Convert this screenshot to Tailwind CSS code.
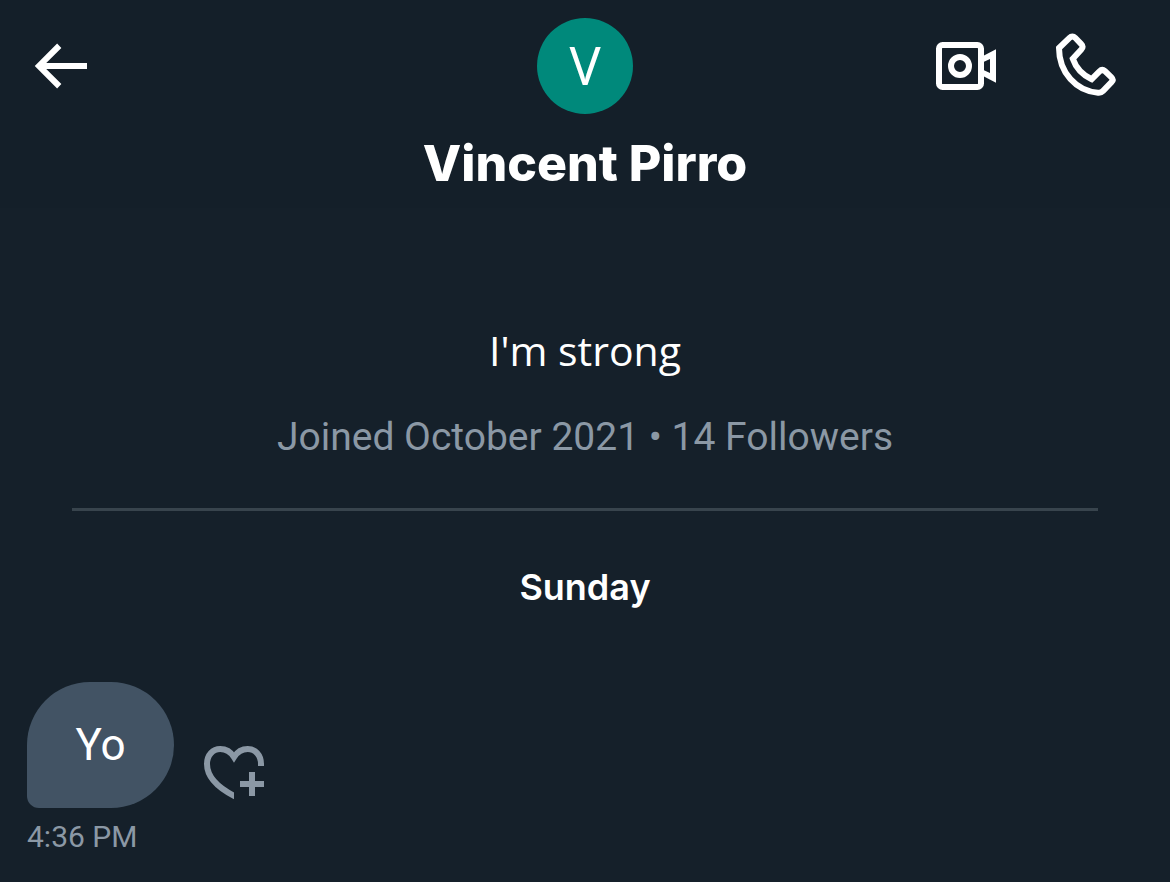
<!DOCTYPE html>
<html lang="en">
<head>
<meta charset="utf-8">
<meta name="viewport" content="width=device-width, initial-scale=1">
<title>Vincent Pirro</title>
<script src="https://cdn.jsdelivr.net/npm/@tailwindcss/browser@4"></script>
</head>
<body class="min-h-screen bg-[#15202a] font-['Roboto','Noto_Sans',sans-serif] text-white">
<header class="grid grid-cols-[1fr_auto_1fr] items-start bg-[#141f29] px-6 pt-4 pb-4">
  <button type="button" aria-label="Back" class="mt-3.5 size-18 justify-self-start">
    <svg viewBox="0 0 24 24" class="size-full" fill="currentColor" aria-hidden="true"><path d="M7.414 13l5.043 5.04-1.414 1.42L3.586 12l7.457-7.46 1.414 1.42L7.414 11H21v2H7.414z"/></svg>
  </button>
  <div class="flex flex-col items-center">
    <div class="mt-0.5 flex size-24 items-center justify-center rounded-full bg-[#00897b] pb-0.5 font-['Noto_Sans',sans-serif] text-[52px]">V</div>
    <h1 class="mt-5 font-['Inter',sans-serif] text-[50px] leading-[58px] font-extrabold">Vincent Pirro</h1>
  </div>
  <div class="mt-3.5 mr-6 flex gap-12 justify-self-end">
    <button type="button" aria-label="Video call" class="size-18">
      <svg viewBox="0 0 24 24" class="size-full" aria-hidden="true"><rect x="3" y="5" width="14" height="14" rx="1.200" fill="none" stroke="currentColor" stroke-width="2"/><circle cx="10" cy="12" r="3" fill="none" stroke="currentColor" stroke-width="2"/><path d="M18 8.500l4-2.100v11.200l-4-2.100v-2.100l2 .9V9.700l-2 .9z" fill="currentColor"/></svg>
    </button>
    <button type="button" aria-label="Call" class="size-18">
      <svg viewBox="0 0 24 24" class="size-full" fill="none" stroke="currentColor" stroke-width="2" aria-hidden="true"><path d="M3 6L6.500 2.600c.6-.6 1.300-.6 1.900 0l2.100 2.200c.5.5.5 1.100 0 1.600L7.600 9.600c1 2.900 3.200 5.400 6.300 6.800l2.600-2.600c.6-.6 1.200-.6 1.800-.1l2.100 2c.6.6.6 1.200.1 1.700L17.700 20.300c-.5.5-1 .7-1.700.6C8.800 20.400 3 14.200 3 6z"/></svg>
    </button>
  </div>
</header>
<main class="flex flex-col">
  <p class="mt-28 text-center font-['Open_Sans',sans-serif] text-[41px] leading-[60px]">I'm strong</p>
  <p class="mt-7 text-center text-[39px] leading-[58px] text-[#8b98a5]">Joined October 2021 • 14 Followers</p>
  <hr class="mx-18 mt-[42px] border-t-3 border-[#38444d]">
  <h2 class="mt-[50px] text-center font-['Inter',sans-serif] text-[36px] leading-[52px] font-semibold">Sunday</h2>
  <div class="mt-[69px] flex items-end gap-6 px-[27px]">
    <p class="min-w-[147px] rounded-[63px] rounded-bl-[12px] bg-[#425364] px-12 py-8 text-center text-[44px] leading-[62px]">Yo</p>
    <button type="button" aria-label="Add reaction" class="mb-0.5 size-18 text-[#8b98a5]">
      <svg viewBox="0 0 24 24" class="size-full" aria-hidden="true"><clipPath id="heart"><path d="M0 0h24v10.670H12V24H0z"/></clipPath><path clip-path="url(#heart)" fill="none" stroke="currentColor" stroke-width="2" d="M21 12V10C21 7 19 5 16.600 5c-1.800 0-3.400.8-4.600 2.700C10.800 5.800 9.200 5 7.400 5 5 5 3 7 3 10c0 4.200 3.600 7.800 9 10.600l2 1"/><path fill="currentColor" d="M17 12.670h2v3h3v2h-3v3h-2v-3h-3v-2h3z"/></svg>
    </button>
  </div>
  <time class="mt-2 px-[27px] text-[30px] leading-[42px] text-[#8b98a5]">4:36 PM</time>
</main>
</body>
</html>
